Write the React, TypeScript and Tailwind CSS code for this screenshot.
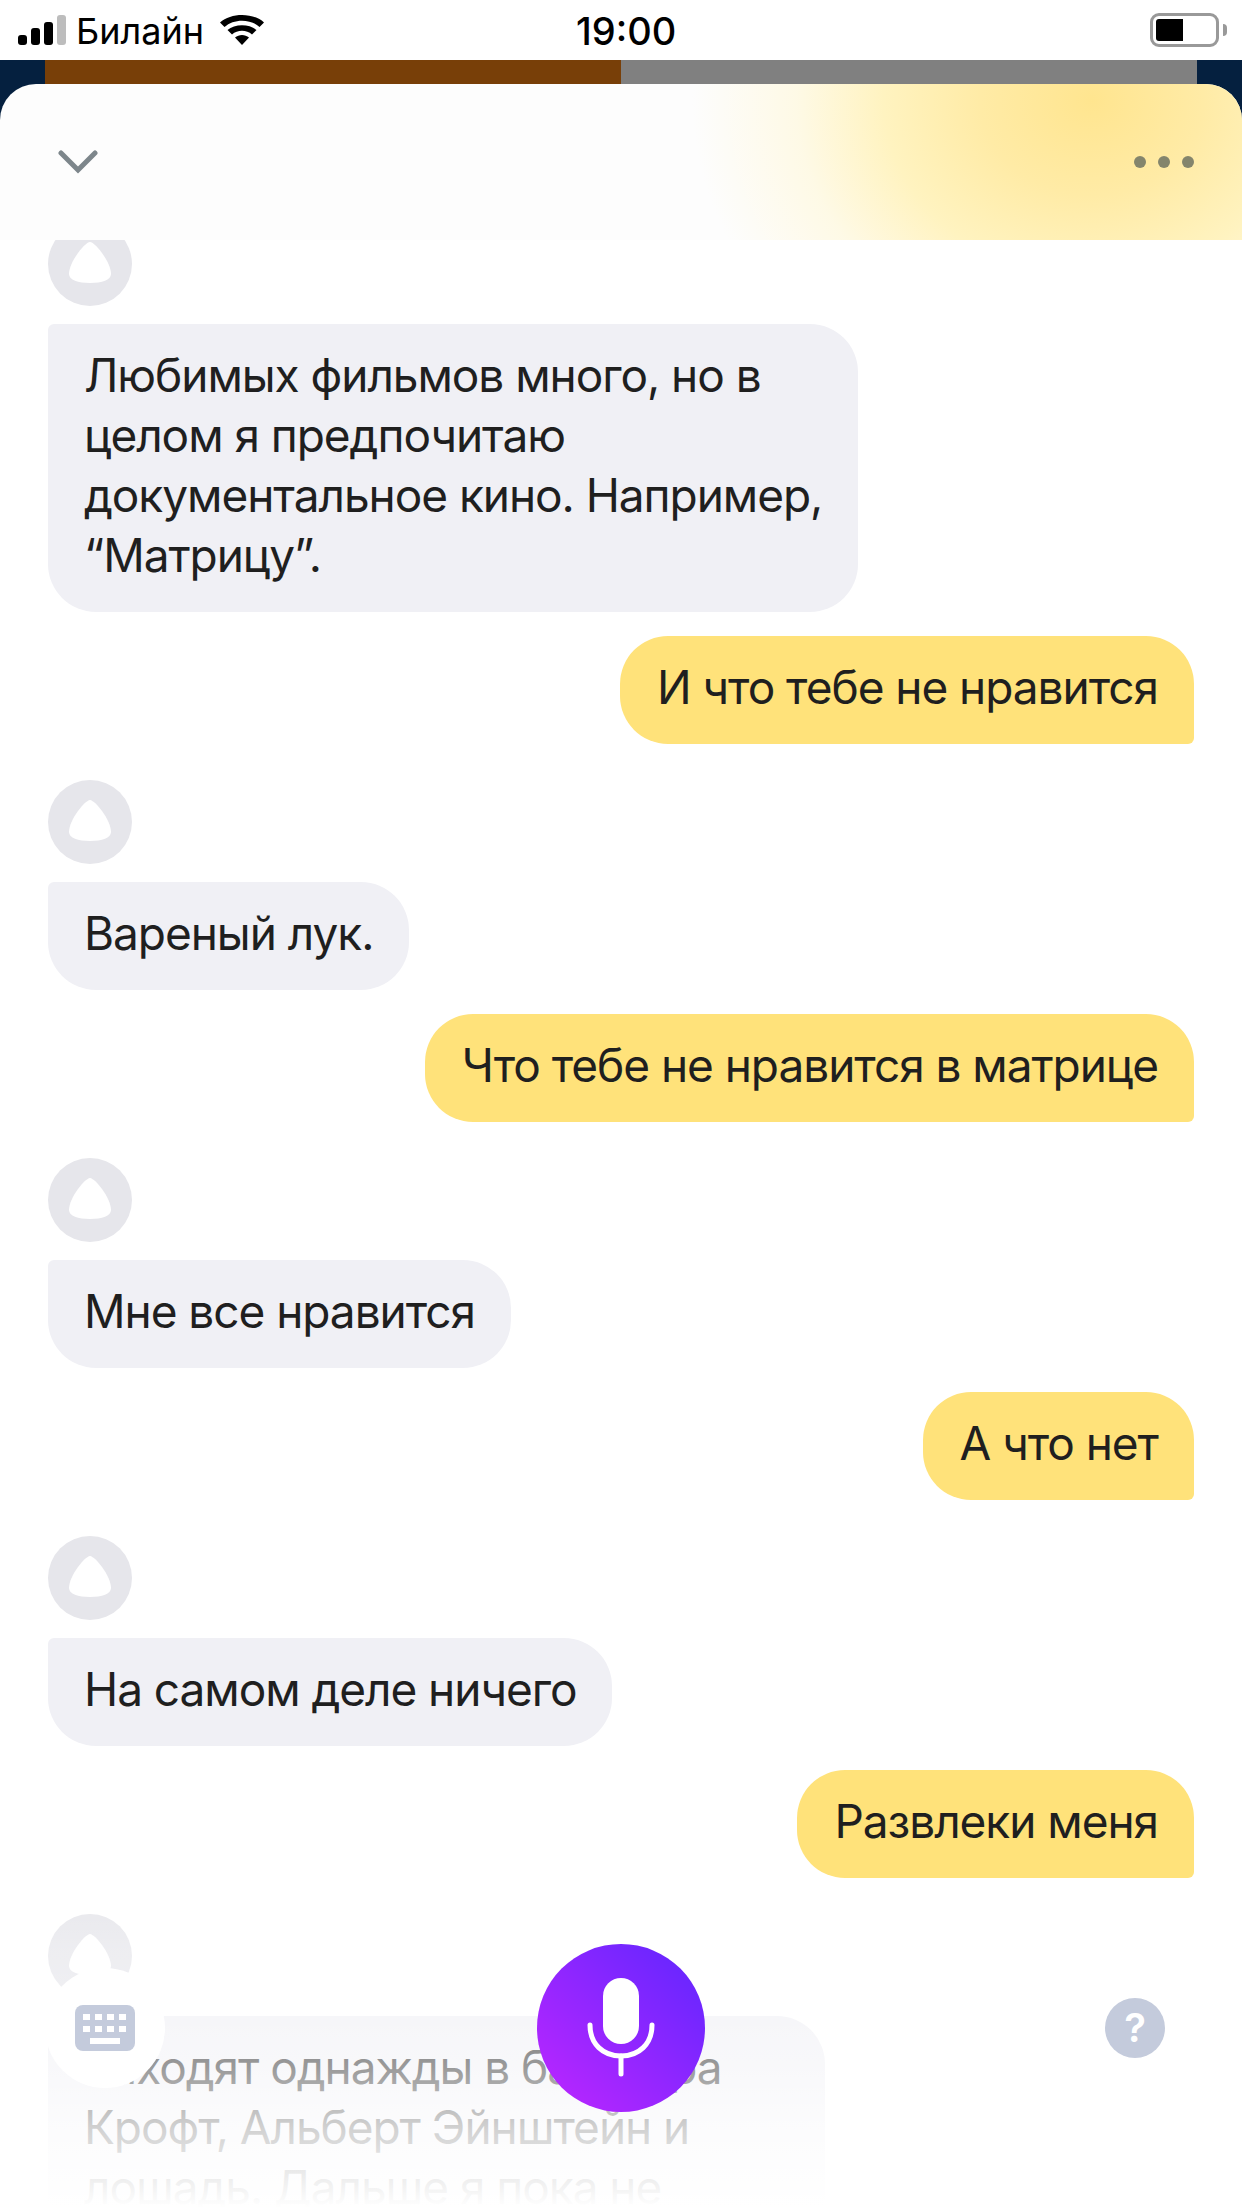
import React from 'react';

const AliceAvatar = () => (
  <div className="flex h-[84px] w-[84px] items-center justify-center rounded-full bg-[#e6e6eb]">
    <svg width="42" height="41" viewBox="0 0 42 41" className="mb-[4px]">
      <path d="M21 0C26 0 42 20 42 32C42 38 33 41 21 41C9 41 0 38 0 32C0 20 16 0 21 0Z" fill="#fff" />
    </svg>
  </div>
);

const AliceBubble = ({ lines, fixed }: { lines: string[]; fixed?: boolean }) => (
  <div className="flex flex-col items-start">
    <AliceAvatar />
    <div
      className={`mt-[18px] rounded-[48px] rounded-tl-[6px] bg-[#f0f0f5] pb-[27px] pl-9 pt-[21px] text-[#1f1f1f] ${
        fixed ? 'w-[777px]' : 'pr-9'
      }`}
    >
      {lines.map((line) => (
        <div key={line} className="whitespace-nowrap">
          {line}
        </div>
      ))}
    </div>
  </div>
);

const UserBubble = ({ text }: { text: string }) => (
  <div className="mb-3 flex justify-end">
    <div className="whitespace-nowrap rounded-[48px] rounded-br-[6px] bg-[#ffe27a] pb-[27px] pl-[37px] pr-9 pt-[21px] text-[#1f1f1f]">
      {text}
    </div>
  </div>
);

const StatusBar = () => (
  <div className="relative flex h-[60px] items-center bg-white pl-[18px] text-[36px] tracking-normal text-black">
    <svg width="48" height="30" viewBox="0 0 48 30">
      <rect x="0" y="20" width="9" height="10" rx="3" fill="#000" />
      <rect x="13" y="13" width="9" height="17" rx="3" fill="#000" />
      <rect x="26" y="7" width="9" height="23" rx="3" fill="#000" />
      <rect x="39" y="0" width="9" height="30" rx="3" fill="#bdbdbd" />
    </svg>
    <span className="ml-[10px] mt-[2px] leading-none">Билайн</span>
    <svg width="44" height="30" viewBox="0 0 44 30" className="ml-[16px]">
      <path d="M22 30L15 22.5C19 19 25 19 29 22.5Z" fill="#000" />
      <path d="M12 19.5L7.5 15C14.5 8.5 29.5 8.5 36.5 15L32 19.5C26.5 14.5 17.5 14.5 12 19.5Z" fill="#000" />
      <path d="M4.5 12L0 7.5C11 -2.5 33 -2.5 44 7.5L39.5 12C30.5 3.5 13.5 3.5 4.5 12Z" fill="#000" />
    </svg>
    <span className="absolute left-[576px] mt-[2px] text-[38px] font-medium leading-none">19:00</span>
    <div className="absolute left-[1150px] top-[13px] flex items-center">
      <div className="h-[34px] w-[69px] rounded-[9px] border-[3px] border-[#999] p-[3px]">
        <div className="h-full w-[27px] rounded-l-[3px] bg-black" />
      </div>
      <div className="ml-[4px] h-[12px] w-[4px] rounded-r-full bg-[#999]" />
    </div>
  </div>
);

const Header = () => (
  <div className="relative z-10">
    <div className="flex h-6 bg-[#05203f]">
      <div className="ml-[45px] w-[576px] bg-[#783f08]" />
      <div className="w-[576px] bg-[#808080]" />
    </div>
    <div className="absolute left-0 top-6 h-10 w-full bg-[#05203f]" />
    <div className="relative flex h-[156px] items-center justify-between overflow-hidden rounded-t-[36px] bg-[#fdfdfd] pl-[58px] pr-[48px]">
      <div className="absolute inset-0 bg-[radial-gradient(ellipse_400px_340px_at_1092px_16px,#ffe58f_0%,#ffeba6_28%,#fff3c0_52%,rgba(255,248,220,0.7)_74%,rgba(255,255,255,0)_100%)]" />
      <svg width="40" height="24" viewBox="0 0 40 24" className="relative">
        <path d="M3 3L20 20L37 3" fill="none" stroke="#7d868b" strokeWidth="5" strokeLinecap="round" />
      </svg>
      <div className="relative flex gap-3">
        <div className="h-3 w-3 rounded-full bg-[#84856c]" />
        <div className="h-3 w-3 rounded-full bg-[#84856c]" />
        <div className="h-3 w-3 rounded-full bg-[#84856c]" />
      </div>
    </div>
  </div>
);

const BottomBar = () => (
  <>
    <div className="absolute bottom-0 left-0 h-[328px] w-full bg-[linear-gradient(to_bottom,rgba(255,255,255,0)_0%,rgba(255,255,255,0.3)_21%,rgba(255,255,255,0.4)_41%,rgba(255,255,255,0.55)_57%,rgba(255,255,255,0.8)_76%,rgba(255,255,255,0.95)_94%,#fff_100%)]" />
    <div className="absolute left-[45px] top-[1968px] flex h-[120px] w-[120px] items-center justify-center rounded-full bg-white">
      <svg width="60" height="46" viewBox="0 0 60 46">
        <rect width="60" height="46" rx="8" fill="#c4cbdc" />
        {[8, 20, 32, 44].map((x) => (
          <rect key={`a${x}`} x={x} y="9" width="7" height="6" fill="#fff" />
        ))}
        {[8, 20, 32, 44].map((x) => (
          <rect key={`b${x}`} x={x} y="21" width="7" height="6" fill="#fff" />
        ))}
        <rect x="15" y="33" width="30" height="6" fill="#fff" />
      </svg>
    </div>
    <div className="absolute left-[537px] top-[1944px] flex h-[168px] w-[168px] items-center justify-center rounded-full bg-[linear-gradient(45deg,#c026ff,#5e26ff)]">
      <svg width="68" height="100" viewBox="0 0 68 100">
        <rect x="16" y="0" width="36" height="66" rx="18" fill="#fff" />
        <path d="M3 47C3 66 16 78 34 78C52 78 65 66 65 47" fill="none" stroke="#fff" strokeWidth="5" strokeLinecap="round" />
        <path d="M34 78V96" fill="none" stroke="#fff" strokeWidth="5" strokeLinecap="round" />
      </svg>
    </div>
    <div className="absolute left-[1105px] top-[1998px] flex h-[60px] w-[60px] items-center justify-center rounded-full bg-[#c4cbdc] text-[40px] font-semibold leading-none tracking-normal text-white">
      ?
    </div>
  </>
);

export default function App() {
  return (
    <div className="relative h-[2208px] w-[1242px] overflow-hidden bg-white font-['Inter','Noto_Sans',sans-serif] text-[46px] leading-[60px] tracking-[-1.05px]">
      <StatusBar />
      <Header />
      <div className="-mt-[18px] flex flex-col gap-6 px-12">
        <AliceBubble
          lines={[
            'Любимых фильмов много, но в',
            'целом я предпочитаю',
            'документальное кино. Например,',
            '“Матрицу”.',
          ]}
        />
        <UserBubble text="И что тебе не нравится" />
        <AliceBubble lines={['Вареный лук.']} />
        <UserBubble text="Что тебе не нравится в матрице" />
        <AliceBubble lines={['Мне все нравится']} />
        <UserBubble text="А что нет" />
        <AliceBubble lines={['На самом деле ничего']} />
        <UserBubble text="Развлеки меня" />
        <AliceBubble
          fixed
          lines={['Заходят однажды в бар Лара', 'Крофт, Альберт Эйнштейн и', 'лошадь. Дальше я пока не']}
        />
      </div>
      <BottomBar />
    </div>
  );
}
